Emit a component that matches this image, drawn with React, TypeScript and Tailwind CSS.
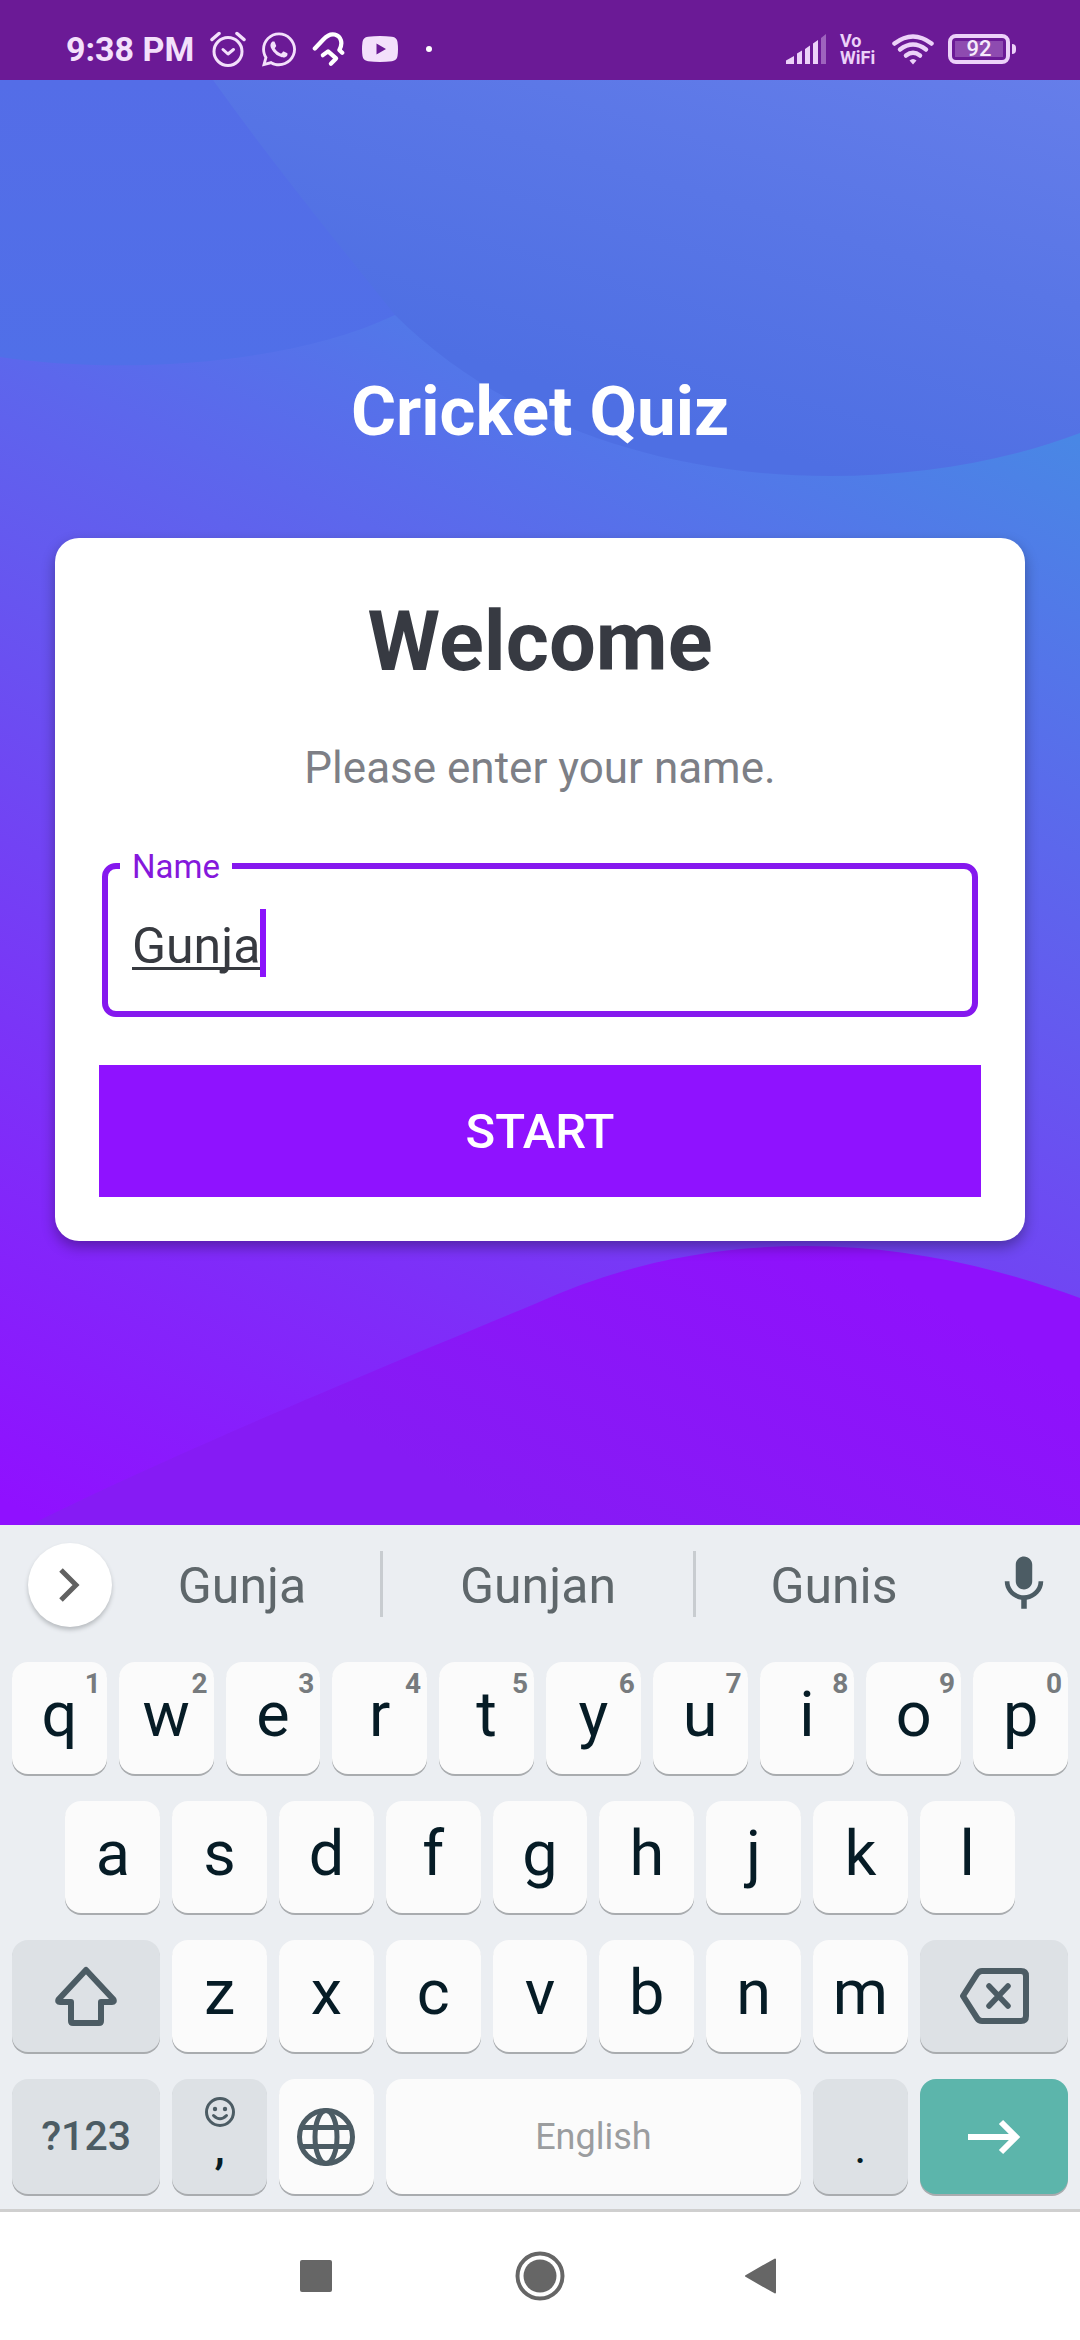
import type { ReactNode } from "react";
import { FaWhatsapp } from "react-icons/fa";
import { MdMic } from "react-icons/md";

function StatusBar() {
  return (
    <header className="flex h-20 shrink-0 items-end justify-between bg-[#6b1a96] pr-16 pb-[11px] pl-[66px] text-[#f3e0fb]">
      <div className="flex h-10 items-center gap-4">
        <span className="text-[34px] leading-10 font-bold whitespace-nowrap">9:38 PM</span>
        <svg className="h-9 w-9" viewBox="0 0 36 36" fill="none" stroke="currentColor" strokeWidth="3" strokeLinecap="round" aria-label="Alarm">
          <circle cx="18" cy="20.5" r="14" />
          <path d="M13 18.5l5 4.500 5.500-4.500" strokeLinejoin="round" />
          <path d="M2 8.500L9 2.500M34 8.500L27 2.500" strokeWidth="3.5" />
        </svg>
        <FaWhatsapp className="h-[39px] w-[34px]" aria-label="WhatsApp" />
        <svg className="h-9 w-[34px]" viewBox="0 0 36 36" fill="none" stroke="#fff" strokeWidth="4.5" strokeLinecap="round" strokeLinejoin="round" aria-label="Notification">
          <path d="M3 17.500L12 8C17 2.500 21 2 24 2.700C31 4.500 33 12 29 19L32 22" />
          <path d="M11.500 24.500L17 20.500L25.500 28L20 33.500" />
        </svg>
        <svg className="h-[26px] w-9" viewBox="0 0 36 26" aria-label="YouTube">
          <path fill="currentColor" fillRule="evenodd" d="M6 .8Q18-.6 30 .8Q35 1.500 35.500 6Q36.500 13 35.500 20Q35 24.500 30 25.200Q18 26.600 6 25.200Q1 24.500.5 20Q-.5 13 .5 6Q1 1.500 6 .8ZM14.500 7.500V18.500L24 13Z" />
        </svg>
        <span className="ml-3 h-1.5 w-1.5 rounded-full bg-white" />
      </div>
      <div className="flex h-10 items-center gap-3.5 text-[#ecd2f9]">
        <svg className="h-[30px] w-10" viewBox="0 0 40 30" fill="currentColor" aria-label="Signal">
          <path d="M0 30V26.500L8 22V30ZM11 30V19.500L16 16.500V30ZM19 30V15L24 11.500V30ZM27 30V9.500L32 6V30Z" />
          <path d="M35 30V4L40 0V30Z" opacity=".4" />
        </svg>
        <span className="w-[38px] text-[18px] leading-[17px] font-bold">
          Vo
          <br />
          WiFi
        </span>
        <svg className="h-[31px] w-[42px]" viewBox="0 0 42 31" fill="none" stroke="currentColor" strokeWidth="4.500" strokeLinecap="round" aria-label="Wi-Fi">
          <path d="M2.500 9.500Q21-4.500 39.500 9.500" />
          <path d="M8 15.500Q21 5.500 34 15.500" />
          <path d="M14 21.500Q21 16 28 21.500" />
          <path d="M21 30.500L17.500 26.500Q21 23.500 24.500 26.500Z" fill="currentColor" stroke="none" />
        </svg>
        <span className="flex items-center gap-0.5">
          <span className="flex h-[30px] w-[62px] rounded-[8px] border-4 border-current p-[3px]">
            <span className="flex flex-1 items-center justify-center bg-[#8e4bb0] text-[22px] leading-none font-medium text-[#f6ebfc]">92</span>
          </span>
          <span className="h-2.5 w-1 rounded-r-full bg-current" />
        </span>
      </div>
    </header>
  );
}

function Backdrop() {
  return (
    <svg className="absolute inset-0 h-full w-full" viewBox="0 80 1080 1445" preserveAspectRatio="none" aria-hidden="true">
      <defs>
        <linearGradient id="base" gradientUnits="userSpaceOnUse" x1="0" y1="1500" x2="604" y2="217">
          <stop offset="0" stopColor="#9010ff" />
          <stop offset="1" stopColor="#4987e5" />
        </linearGradient>
        <linearGradient id="left" gradientUnits="userSpaceOnUse" x1="0" y1="80" x2="0" y2="365">
          <stop offset="0" stopColor="#546de7" />
          <stop offset="1" stopColor="#506fe8" />
        </linearGradient>
        <linearGradient id="right" gradientUnits="userSpaceOnUse" x1="600" y1="400" x2="733" y2="-37">
          <stop offset="0" stopColor="#4e6fe3" />
          <stop offset=".5" stopColor="#5976e6" />
          <stop offset="1" stopColor="#667eea" />
        </linearGradient>
        <linearGradient id="hill" gradientUnits="userSpaceOnUse" x1="850" y1="1250" x2="650" y2="1600">
          <stop offset="0" stopColor="#8f11fc" />
          <stop offset="1" stopColor="#861bf4" />
        </linearGradient>
      </defs>
      <rect y="80" width="1080" height="1445" fill="url(#base)" />
      <path d="M0 80H420V300L395 315C290 365 120 375 0 357Z" fill="url(#left)" />
      <path d="M213 80C270 160 335 240 395 315C500 420 660 476 830 476C920 476 1010 460 1080 433V80Z" fill="url(#right)" />
      <path d="M30 1525C180 1450 400 1360 537 1303C620 1265 710 1246 806 1246C900 1246 990 1265 1080 1298V1525Z" fill="url(#hill)" />
    </svg>
  );
}

function NameField() {
  return (
    <fieldset className="mx-[3px] rounded-[14px] border-[6px] border-[#8518ee]">
      <legend className="ml-3 px-3 pt-0.5 text-[33px] leading-[38px] text-[#8518dc]">
        <label htmlFor="name">Name</label>
      </legend>
      <div className="relative text-[50px] leading-[68px] text-[#373a40]">
        <input
          id="name"
          type="text"
          defaultValue="Gunja"
          className="block h-[125px] w-full bg-transparent px-6 pb-1.5 underline decoration-[3px] underline-offset-[4px] outline-none [text-decoration-skip-ink:none]"
        />
        <span className="pointer-events-none absolute inset-0 flex items-center px-6 pb-3" aria-hidden="true">
          <span className="h-[68px] border-r-[6px] border-[#8b14fb] text-transparent select-none">Gunja</span>
        </span>
      </div>
    </fieldset>
  );
}

const KEY = "flex items-center justify-center rounded-2xl text-[#061c26] shadow-[0_2px_0_#a9acaf]";
const LETTER = "relative col-span-2 h-28 bg-[#fbfbfb] pb-2 text-[63px] leading-none";

function Letter({ char, hint, indent }: { char: string; hint?: string; indent?: boolean }) {
  return (
    <button type="button" className={`${KEY} ${LETTER} ${indent ? "col-start-2" : ""}`}>
      {char}
      {hint && <span className="absolute top-2 right-1.5 text-[28px] leading-7 font-bold text-[#777b7e]">{hint}</span>}
    </button>
  );
}

function KeyRow({ children }: { children: ReactNode }) {
  return <div className="grid grid-cols-20 gap-3">{children}</div>;
}

function Suggestion({ text, inset }: { text: string; inset?: boolean }) {
  return (
    <button type="button" className={`pt-1 text-center text-[50px] leading-[62px] text-[#5f676b] ${inset ? "pr-2" : ""}`}>
      {text}
    </button>
  );
}

function Keyboard() {
  return (
    <section className="shrink-0 border-b-[3px] border-[#cfcfcf] bg-[#ebeef2] px-3 pb-[15px]" aria-label="Keyboard">
      <div className="flex h-[137px] items-start pt-[18px]">
        <button type="button" aria-label="More" className="ml-4 flex h-[84px] w-[84px] items-center justify-center rounded-full bg-white shadow-[0_3px_4px_#b9bdc1]">
          <svg className="h-9 w-6" viewBox="0 0 24 36" fill="none" stroke="#616161" strokeWidth="5">
            <path d="M3 3L18 18L3 33" />
          </svg>
        </button>
        <div className="mt-2 grid flex-1 grid-cols-[271fr_313fr_276fr] divide-x-[3px] divide-[#c8ccd0]">
          <Suggestion text="Gunja" inset />
          <Suggestion text="Gunjan" />
          <Suggestion text="Gunis" />
        </div>
        <button type="button" aria-label="Voice input" className="mt-2 flex w-24 justify-center pl-2">
          <MdMic className="h-[66px] w-[66px] text-[#4c5c64]" />
        </button>
      </div>
      <div className="flex flex-col gap-[27px]">
        <KeyRow>
          {Array.from("qwertyuiop").map((c, i) => (
            <Letter key={c} char={c} hint={String((i + 1) % 10)} />
          ))}
        </KeyRow>
        <KeyRow>
          {Array.from("asdfghjkl").map((c, i) => (
            <Letter key={c} char={c} indent={i === 0} />
          ))}
        </KeyRow>
        <KeyRow>
          <button type="button" aria-label="Shift" className={`${KEY} col-span-3 bg-[#dde1e5]`}>
            <svg className="h-[60px] w-[62px]" viewBox="0 0 62 60" fill="none" stroke="#4c5c64" strokeWidth="6" strokeLinejoin="round">
              <path d="M31 4L3.500 33.500Q2.500 36 5 36H16V55Q16 57 18 57H44Q46 57 46 55V36H57Q59.500 36 58.500 33.500Z" />
            </svg>
          </button>
          {Array.from("zxcvbnm").map((c) => (
            <Letter key={c} char={c} />
          ))}
          <button type="button" aria-label="Backspace" className={`${KEY} col-span-3 bg-[#dde1e5]`}>
            <svg className="h-14 w-[70px]" viewBox="0 0 70 56" fill="none" stroke="#4c5c64" strokeWidth="6" strokeLinecap="round" strokeLinejoin="round">
              <path d="M4 28L18 6Q20 3 23 3H62Q67 3 67 8V48Q67 53 62 53H23Q20 53 18 50Z" />
              <path d="M30 18L49 38M49 18L30 38" strokeWidth="5.5" />
            </svg>
          </button>
        </KeyRow>
        <KeyRow>
          <button type="button" className={`${KEY} col-span-3 h-[115px] bg-[#dde1e5] text-[41px] font-medium`}>
            <span className="text-[#4c5c64]">?123</span>
          </button>
          <button type="button" aria-label="Comma and emoji" className={`${KEY} col-span-2 flex-col bg-[#dde1e5] pt-2`}>
            <svg className="h-8 w-8" viewBox="0 0 32 32" fill="none" stroke="#4c5c64" strokeWidth="3">
              <circle cx="16" cy="16" r="13.500" />
              <path d="M9.500 19.500Q16 26 22.500 19.500" strokeLinecap="round" />
              <circle cx="11" cy="13" r="2.200" fill="#4c5c64" stroke="none" />
              <circle cx="21" cy="13" r="2.200" fill="#4c5c64" stroke="none" />
            </svg>
            <span className="pb-5 text-[46px] leading-[38px] font-medium">,</span>
          </button>
          <button type="button" aria-label="Change language" className={`${KEY} col-span-2 bg-[#fbfbfb]`}>
            <svg className="h-[60px] w-[60px]" viewBox="0 0 60 60" fill="none" stroke="#4c5c64" strokeWidth="5">
              <circle cx="30" cy="30" r="26.500" />
              <ellipse cx="30" cy="30" rx="11" ry="26.500" />
              <path d="M5 20.500H55M5 39.500H55" />
            </svg>
          </button>
          <button type="button" className={`${KEY} col-span-8 bg-[#fbfbfb] text-[36px]`}>
            <span className="text-[#9b9d9f]">English</span>
          </button>
          <button type="button" className={`${KEY} col-span-2 bg-[#dde1e5] pt-5 text-[46px] leading-none`}>.</button>
          <button type="button" aria-label="Go" className={`${KEY} col-span-3 bg-[#5cb5ab]`}>
            <svg className="h-9 w-[54px]" viewBox="0 0 54 36" fill="none" stroke="#fff" strokeWidth="6">
              <path d="M1 18H48M34 3L49 18L34 33" />
            </svg>
          </button>
        </KeyRow>
      </div>
    </section>
  );
}

function SystemNav() {
  return (
    <nav className="flex h-32 shrink-0 items-center justify-center gap-[179px] bg-white text-[#666]">
      <button type="button" aria-label="Recent apps" className="flex w-10 justify-center">
        <span className="h-8 w-8 rounded-[2px] bg-current" />
      </button>
      <button type="button" aria-label="Home">
        <svg className="h-[50px] w-[50px]" viewBox="0 0 50 50">
          <circle cx="25" cy="25" r="22.500" fill="none" stroke="currentColor" strokeWidth="4" />
          <circle cx="25" cy="25" r="16.500" fill="currentColor" />
        </svg>
      </button>
      <button type="button" aria-label="Back" className="flex w-10 justify-start">
        <svg className="h-9 w-8" viewBox="0 0 32 36">
          <path d="M2 18L31 1.500V34.500Z" fill="currentColor" stroke="currentColor" strokeWidth="2" strokeLinejoin="round" />
        </svg>
      </button>
    </nav>
  );
}

export default function App() {
  return (
    <div className="flex min-h-screen flex-col font-[Roboto,sans-serif]">
      <StatusBar />
      <main className="relative flex-1">
        <Backdrop />
        <div className="relative px-[55px] pt-[290px] pb-14">
          <h1 className="text-center text-[69px] leading-[84px] font-bold text-white">Cricket Quiz</h1>
          <form className="mt-[84px] flex flex-col rounded-[24px] bg-white px-11 pt-[60px] pb-11 shadow-[0_6px_14px_rgba(0,0,0,0.32)]" onSubmit={(e) => e.preventDefault()}>
            <h2 className="text-center text-[83px] leading-[88px] font-bold text-[#373a42]">Welcome</h2>
            <p className="mt-14 mb-[52px] text-center text-[44px] leading-[52px] text-[#7d7f86]">Please enter your name.</p>
            <NameField />
            <button type="submit" className="mt-12 h-[132px] bg-[#8f12ff] pt-0.5 text-[49px] font-medium text-white">START</button>
          </form>
        </div>
      </main>
      <Keyboard />
      <SystemNav />
    </div>
  );
}
